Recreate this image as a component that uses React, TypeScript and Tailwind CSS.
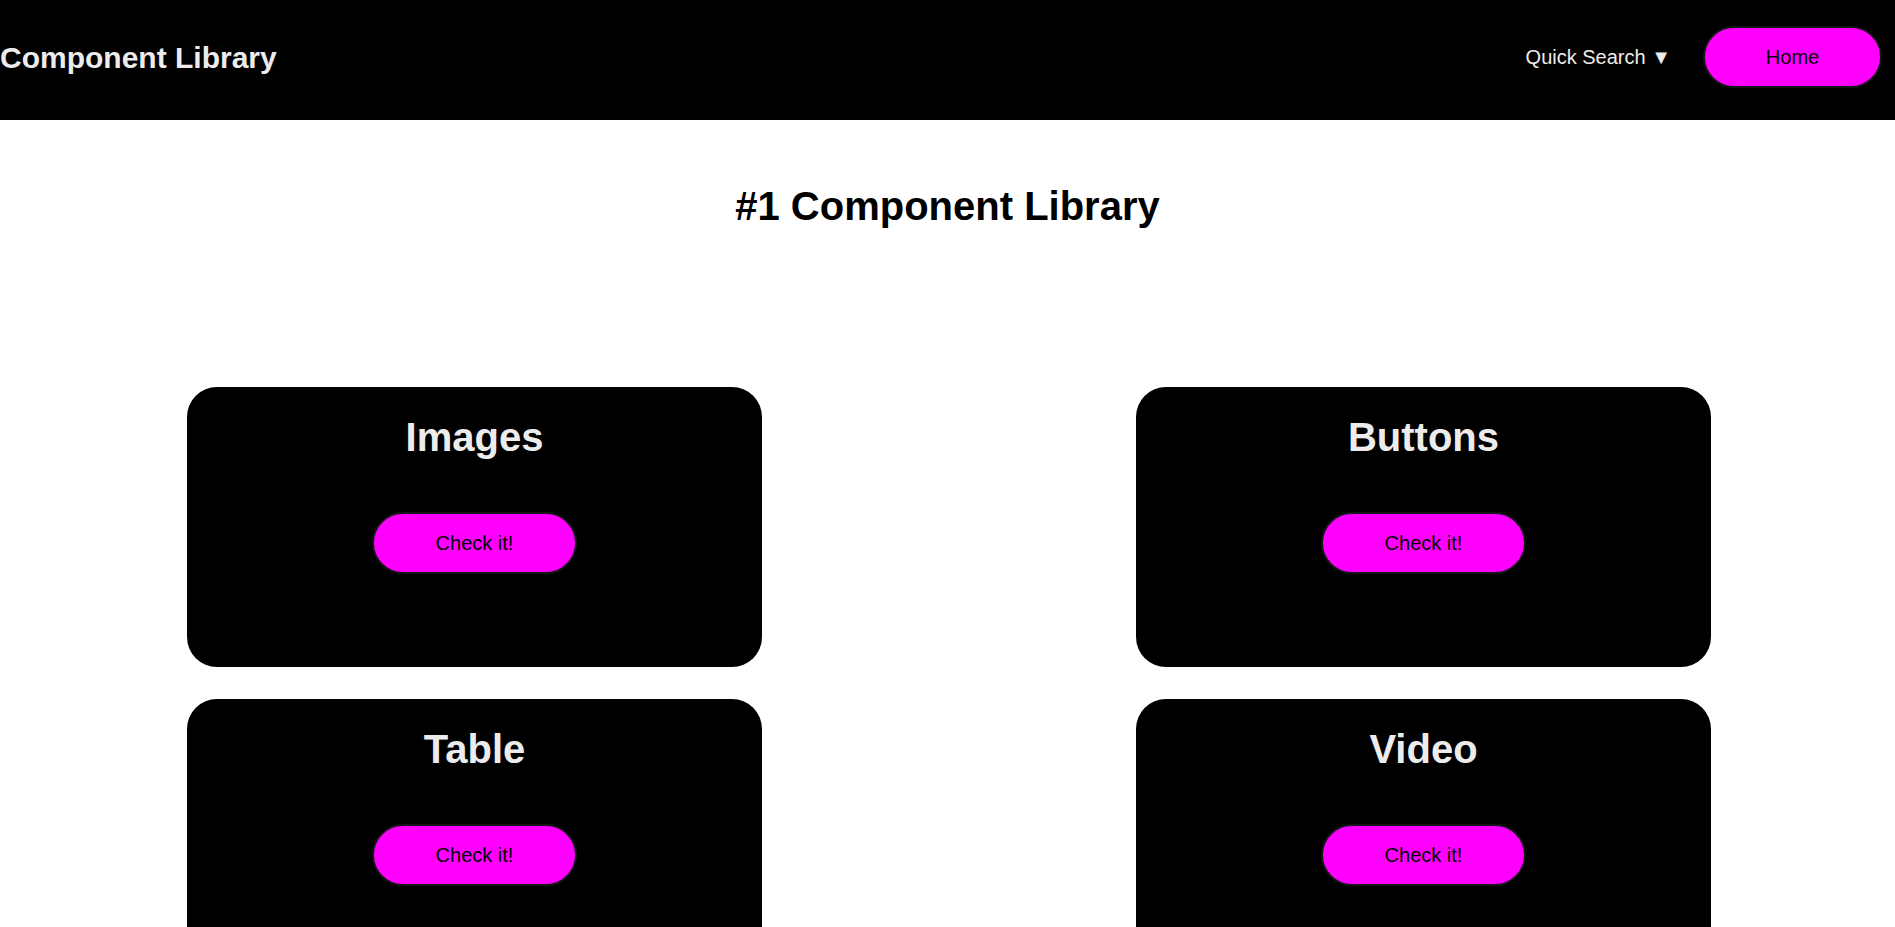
import React from "react";

const sections = ["Images", "Buttons", "Table", "Video"];

function CheckButton({ label }: { label: string }) {
  return (
    <button className="h-[62px] px-[62px] rounded-full bg-[#ff00ff] border-2 border-[#161616] text-black text-[20px] font-normal leading-none cursor-pointer">
      {label}
    </button>
  );
}

export default function App() {
  return (
    <div className="min-h-screen bg-white font-['Liberation_Sans',Arial,sans-serif]">
      {/* Top bar */}
      <header className="h-[120px] bg-black flex items-center justify-between pb-[6px] pr-[13px]">
        <h1 className="text-[30px] font-bold text-[#ececec] leading-normal">Component Library</h1>
        <nav className="flex items-center gap-[32px]">
          <span className="text-[20px] text-[#ececec] leading-normal cursor-pointer">Quick Search ▼</span>
          <button className="h-[62px] w-[179px] rounded-full bg-[#ff00ff] border-2 border-[#161616] text-black text-[20px] leading-none cursor-pointer">
            Home
          </button>
        </nav>
      </header>

      <h2 className="mt-[56px] text-center text-[40px] font-bold text-black leading-normal">
        #1 Component Library
      </h2>

      {/* Sections grid */}
      <main className="mt-[151px] grid grid-cols-[575px_575px] justify-between gap-y-[32px] pb-10 pl-[187px] pr-[184px]">
        {sections.map((name) => (
          <div
            key={name}
            className="w-[575px] h-[280px] bg-black rounded-[30px] flex flex-col items-center pt-[20px]"
          >
            <h3 className="text-[40px] font-bold text-[#ececec] leading-normal">{name}</h3>
            <div className="mt-[45px]">
              <CheckButton label="Check it!" />
            </div>
          </div>
        ))}
      </main>
    </div>
  );
}
